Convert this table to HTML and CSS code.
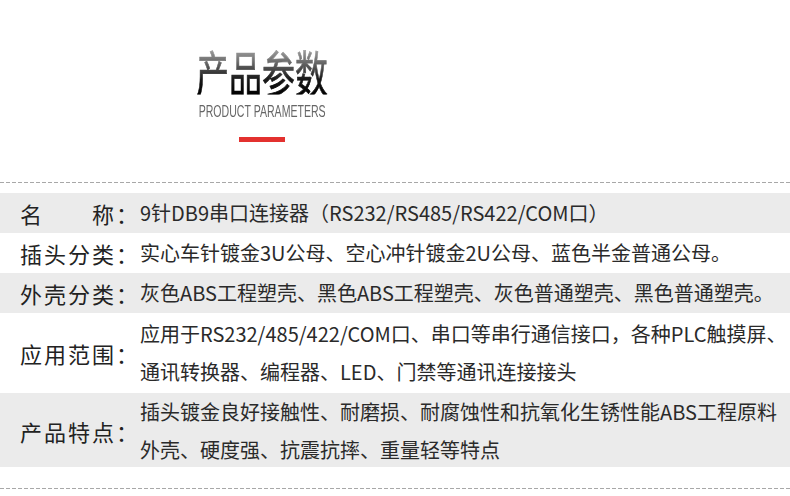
FILE: index.html
```html
<!DOCTYPE html>
<html lang="zh-CN">
<head>
<meta charset="utf-8">
<title>产品参数</title>
<link rel="stylesheet" href="styles.css">
</head>
<body>
<header class="header">
  <h1 class="title">产品参数</h1>
  <p class="subtitle">PRODUCT PARAMETERS</p>
  <div class="bar"></div>
</header>
<div class="divider"></div>
<section class="params">
  <div class="row shade">
    <div class="label">名　　称：</div>
    <div class="value">9针DB9串口连接器（RS232/RS485/RS422/COM口）</div>
  </div>
  <div class="row">
    <div class="label">插头分类：</div>
    <div class="value">实心车针镀金3U公母、空心冲针镀金2U公母、蓝色半金普通公母。</div>
  </div>
  <div class="row shade">
    <div class="label">外壳分类：</div>
    <div class="value">灰色ABS工程塑壳、黑色ABS工程塑壳、灰色普通塑壳、黑色普通塑壳。</div>
  </div>
  <div class="row tall">
    <div class="label">应用范围：</div>
    <div class="value multi">应用于RS232/485/422/COM口、串口等串行通信接口，各种PLC触摸屏、<br>通讯转换器、编程器、LED、门禁等通讯连接接头</div>
  </div>
  <div class="row shade tall2">
    <div class="label">产品特点：</div>
    <div class="value multi">插头镀金良好接触性、耐磨损、耐腐蚀性和抗氧化生锈性能ABS工程原料<br>外壳、硬度强、抗震抗摔、重量轻等特点</div>
  </div>
</section>
<div class="divider bottom"></div>
</body>
</html>
```

FILE: styles.css
```css
* { box-sizing: border-box; }
html, body {
  margin: 0;
  padding: 0;
  background: #fff;
}
body {
  width: 790px;
  height: 496px;
  overflow: hidden;
  font-family: "Noto Sans CJK SC", "Noto Sans", sans-serif;
  color: #262626;
}
.header {
  width: 524px;
  height: 182px;
  padding-top: 58px;
  display: flex;
  flex-direction: column;
  align-items: center;
}
.title {
  margin: 0;
  font-size: 33px;
  line-height: 30px;
  font-weight: 400;
  background: linear-gradient(to bottom, #a0a0a0 0%, #666 30%, #1a1a1a 65%, #000 100%);
  -webkit-background-clip: text;
  background-clip: text;
  color: transparent;
  -webkit-text-stroke: 0.5px transparent;
  transform: scaleY(1.5);
  transform-origin: 50% 56%;
}
.subtitle {
  margin: 13px 0 0;
  font-family: "Liberation Sans", Arial, sans-serif;
  font-size: 16.5px;
  line-height: 20px;
  color: #666;
  white-space: nowrap;
  transform: scaleX(0.64);
}
.bar {
  margin-top: 16px;
  width: 46px;
  height: 5px;
  background: #e3312f;
}
.divider {
  height: 1px;
  background-image: repeating-linear-gradient(to right, #a8a8a8 0 4px, transparent 4px 6px);
}
.params {
  margin-top: 10px;
}
.row {
  display: grid;
  grid-template-columns: 140px 1fr;
  align-items: center;
  height: 40px;
}
.row.shade { background: #ebebeb; }
.row.tall { height: 80px; }
.row.tall2 { height: 74px; }
.label {
  padding-left: 20px;
  font-size: 22px;
  letter-spacing: 2px;
  line-height: 40px;
  white-space: nowrap;
  color: #222;
}
.value {
  font-size: 20px;
  line-height: 40px;
  white-space: nowrap;
  color: #2a2a2a;
}
.value.multi { line-height: 38px; }
.divider.bottom { margin-top: 21px; }
```
